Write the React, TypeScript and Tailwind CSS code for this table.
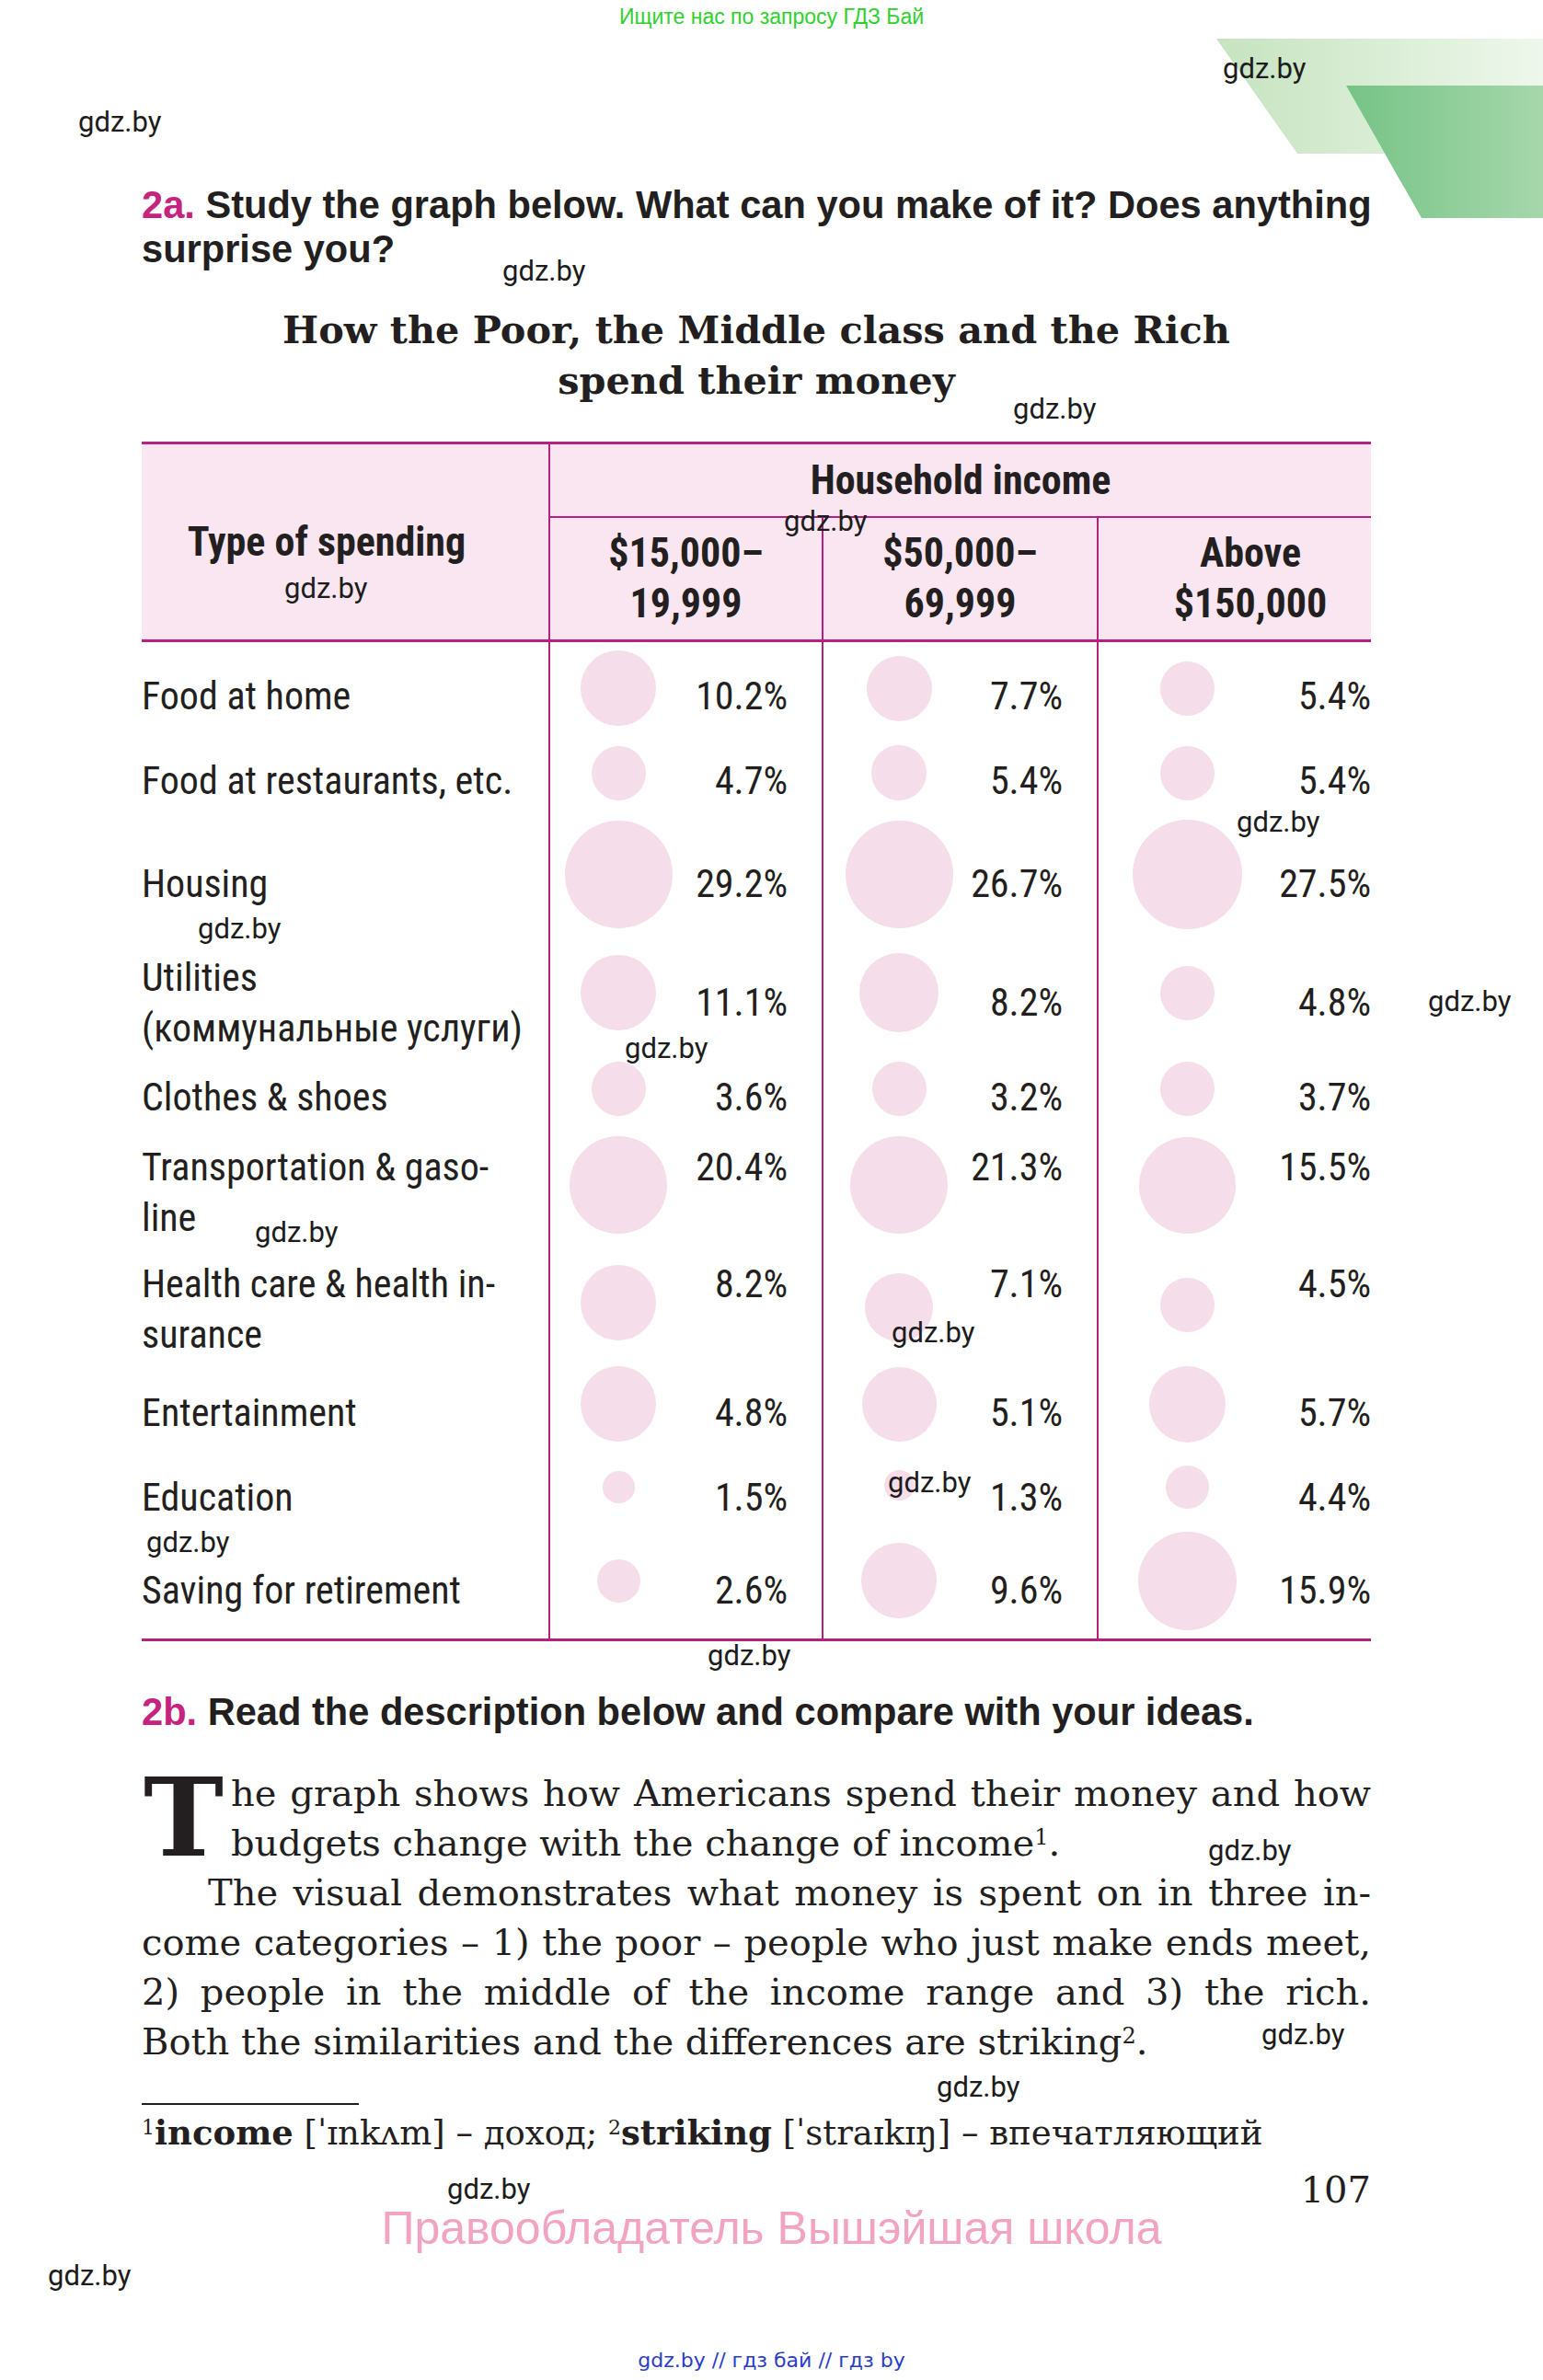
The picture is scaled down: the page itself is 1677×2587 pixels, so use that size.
import React from 'react';

const LINE = '#b3237e';

type Row = {
  label: string[];
  top: number;
  bottom: number;
  labelBase: number;
  pctBase: number;
  cells: [string, number, number][]; // percent, diameter, centre y
};

const rows: Row[] = [
  { label: ['Food at home'], top: 698, bottom: 800, labelBase: 771, pctBase: 771, cells: [['10.2%', 82, 748], ['7.7%', 71, 748], ['5.4%', 59, 748]] },
  { label: ['Food at restaurants, etc.'], top: 800, bottom: 885, labelBase: 863, pctBase: 863, cells: [['4.7%', 59, 840], ['5.4%', 60, 840], ['5.4%', 59, 840]] },
  { label: ['Housing'], top: 885, bottom: 1020, labelBase: 975, pctBase: 975, cells: [['29.2%', 117, 950], ['26.7%', 117, 950], ['27.5%', 119, 950]] },
  { label: ['Utilities', '(коммунальные услуги)'], top: 1020, bottom: 1145, labelBase: 1077, pctBase: 1104, cells: [['11.1%', 82, 1079], ['8.2%', 86, 1079], ['4.8%', 59, 1079]] },
  { label: ['Clothes & shoes'], top: 1145, bottom: 1225, labelBase: 1207, pctBase: 1207, cells: [['3.6%', 59, 1183], ['3.2%', 59, 1183], ['3.7%', 59, 1183]] },
  { label: ['Transportation & gaso-', 'line'], top: 1225, bottom: 1355, labelBase: 1283, pctBase: 1283, cells: [['20.4%', 106, 1288], ['21.3%', 106, 1288], ['15.5%', 105, 1288]] },
  { label: ['Health care & health in-', 'surance'], top: 1355, bottom: 1475, labelBase: 1410, pctBase: 1410, cells: [['8.2%', 82, 1416], ['7.1%', 74, 1421], ['4.5%', 59, 1418]] },
  { label: ['Entertainment'], top: 1475, bottom: 1575, labelBase: 1550, pctBase: 1550, cells: [['4.8%', 82, 1526], ['5.1%', 81, 1526], ['5.7%', 83, 1526]] },
  { label: ['Education'], top: 1575, bottom: 1660, labelBase: 1642, pctBase: 1642, cells: [['1.5%', 35, 1616], ['1.3%', 33, 1614], ['4.4%', 47, 1616]] },
  { label: ['Saving for retirement'], top: 1660, bottom: 1781, labelBase: 1743, pctBase: 1743, cells: [['2.6%', 47, 1718], ['9.6%', 82, 1718], ['15.9%', 107, 1718]] },
];

// content start of each income column and the x of the circle centres
const colStart = [598, 895, 1194];
const circleX = [672, 977, 1290];
const pctRight = [37, 37, 0];

const marks: [number, number][] = [
  [1330, 63], [86, 121], [547, 283], [1102, 433], [853, 555], [310, 628],
  [1345, 882], [216, 998], [1553, 1077], [680, 1128], [278, 1328], [970, 1437],
  [966, 1600], [160, 1665], [770, 1788], [1314, 2000], [1372, 2200], [1019, 2257],
  [487, 2368], [53, 2462],
];

function Watermark({ x, y }: { x: number; y: number }) {
  return (
    <span
      className="absolute font-['Roboto',sans-serif] text-[31px] leading-none text-[#1c1c1c] whitespace-nowrap"
      style={{ left: x - 1, top: y - 4 }}
    >
      gdz.by
    </span>
  );
}

function GreenCorner() {
  return (
    <svg className="absolute top-0 right-0" width="355" height="240" viewBox="1322 0 355 240">
      <defs>
        <linearGradient id="lg" x1="0" y1="0" x2="1" y2="0">
          <stop offset="0" stopColor="#c6e3bf" />
          <stop offset="1" stopColor="#eef7ec" />
        </linearGradient>
        <linearGradient id="dg" x1="0" y1="0" x2="1" y2="0">
          <stop offset="0" stopColor="#76c386" />
          <stop offset="1" stopColor="#a6d7ab" />
        </linearGradient>
      </defs>
      <polygon points="1322,42 1677,42 1677,93 1463,93 1505,167 1410,167" fill="url(#lg)" />
      <polygon points="1463,93 1677,93 1677,237 1545,237" fill="url(#dg)" />
    </svg>
  );
}

function TableRow({ row }: { row: Row }) {
  const h = row.bottom - row.top;
  return (
    <div className="grid grid-cols-[442px_297px_299px_298px]" style={{ height: h }}>
      <div style={{ paddingTop: row.labelBase - 42 - row.top }}>
        {row.label.map((l) => (
          <div key={l} className="whitespace-nowrap">{l}</div>
        ))}
      </div>
      {row.cells.map(([pct, d, cy], i) => (
        <div key={i} className="flex items-start border-l-2 border-[#b3237e]">
          <div
            className="shrink-0 rounded-full bg-[#f5dde9]"
            style={{ width: d, height: d, marginLeft: circleX[i] - d / 2 - colStart[i], marginTop: cy - d / 2 - row.top }}
          />
          <div className="ml-auto" style={{ paddingTop: row.pctBase - 42 - row.top, paddingRight: pctRight[i] }}>
            {pct}
          </div>
        </div>
      ))}
    </div>
  );
}

export default function App() {
  return (
    <div className="relative w-[1677px] h-[2587px] overflow-hidden bg-white text-[#231f20]">
      <GreenCorner />

      <div className="h-[40px] pt-[7px] text-center font-['Liberation_Sans',sans-serif] text-[23px] leading-none text-[#2fd02c]">
        Ищите нас по запросу ГДЗ Бай
      </div>

      <main className="relative w-[1490px] pl-[154px]">
        {/* task 2a */}
        <h2 className="mt-[159px] font-['Liberation_Sans',sans-serif] font-bold text-[41.6px] leading-[48px] whitespace-nowrap">
          <span className="text-[#c6237f]">2a.</span> Study the graph below. What can you make of it? Does anything
          <br />
          surprise you?
        </h2>

        <h1 className="mt-[36px] text-center font-['DejaVu_Serif',serif] font-bold text-[41.4px] leading-[55px]">
          How the Poor, the Middle class and the Rich
          <br />
          spend their money
        </h1>

        {/* table */}
        <div className="mt-[39px] w-[1336px] font-['Roboto_Condensed',sans-serif]">
          <div className="grid h-[218px] grid-cols-[442px_894px] border-y-[3px] border-[#b3237e] bg-[#f9e6f0] font-bold text-[44px] leading-[55px]">
            <div className="flex items-center justify-center pr-[40px]">Type of spending</div>
            <div className="flex flex-col border-l-2 border-[#b3237e]">
              <div className="flex h-[80px] items-center justify-center border-b-2 border-[#b3237e]">Household income</div>
              <div className="grid flex-1 grid-cols-[295px_299px_298px] text-center">
                <div className="flex items-center justify-center">$15,000–<br />19,999</div>
                <div className="flex items-center justify-center border-l-2 border-[#b3237e]">$50,000–<br />69,999</div>
                <div className="flex items-center justify-center border-l-2 border-[#b3237e] pl-[34px]">Above<br />$150,000</div>
              </div>
            </div>
          </div>

          <div className="text-[42px] leading-[55px]">
            {rows.map((r) => (
              <TableRow key={r.label[0]} row={r} />
            ))}
          </div>
          <div className="h-[3px]" style={{ backgroundColor: LINE }} />
        </div>

        {/* task 2b */}
        <h2 className="mt-[53px] font-['Liberation_Sans',sans-serif] font-bold text-[41.6px] leading-[48px] whitespace-nowrap">
          <span className="text-[#c6237f]">2b.</span> Read the description below and compare with your ideas.
        </h2>

        <div className="mt-[37px] w-[1336px] font-['DejaVu_Serif',serif] text-[40px] leading-[54px]">
          <div className="flex">
            <div className="h-[108px] w-[97px] shrink-0 pl-[2px] font-bold text-[117px] leading-[108px]">T</div>
            <div className="flex-1">
              <div className="text-justify [text-align-last:justify]">he graph shows how Americans spend their money and how</div>
              <div>
                budgets change with the change of income<sup className="text-[24px]">1</sup>.
              </div>
            </div>
          </div>
          <div className="pl-[72px] text-justify [text-align-last:justify]">The visual demonstrates what money is spent on in three in-</div>
          <div className="text-justify [text-align-last:justify]">come categories – 1) the poor – people who just make ends meet,</div>
          <div className="text-justify [text-align-last:justify]">2) people in the middle of the income range and 3) the rich.</div>
          <div>
            Both the similarities and the differences are striking<sup className="text-[24px]">2</sup>.
          </div>
        </div>

        {/* footnote */}
        <div className="mt-[40px] h-[2px] w-[236px] bg-[#231f20]" />
        <div className="mt-[3px] whitespace-nowrap font-['DejaVu_Serif',serif] text-[37px] leading-[54px]">
          <sup className="text-[22px]">1</sup>
          <b>income</b> [ˈɪnkʌm] – доход; <sup className="text-[22px]">2</sup>
          <b>striking</b> [ˈstraɪkɪŋ] – впечатляющий
        </div>
        <div className="mt-[7px] text-right font-['DejaVu_Serif',serif] text-[40px] leading-[54px]">107</div>
      </main>

      <div className="absolute left-0 right-0 top-[2397px] text-center font-['Liberation_Sans',sans-serif] text-[50px] leading-none text-[#f2a3c2]">
        Правообладатель Вышэйшая школа
      </div>

      <div className="absolute left-0 right-0 top-[2555px] text-center font-['DejaVu_Sans',sans-serif] text-[22px] leading-none text-[#2b3cc9]">
        gdz.by // гдз бай // гдз by
      </div>

      {marks.map(([x, y]) => (
        <Watermark key={`${x}-${y}`} x={x} y={y} />
      ))}
    </div>
  );
}
